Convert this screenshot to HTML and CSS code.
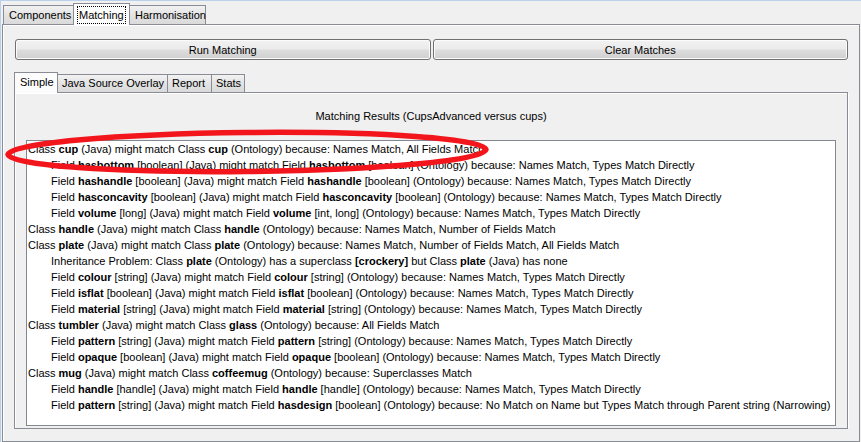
FILE: index.html
```html
<!DOCTYPE html>
<html>
<head>
<meta charset="utf-8">
<link rel="stylesheet" href="styles.css">
</head>
<body>
<div class="app">
  <div class="tabs outer-tabs">
    <div class="tab">Components</div>
    <div class="tab selected"><span class="focus">Matching</span></div>
    <div class="tab">Harmonisation</div>
  </div>
  <div class="panel outer-panel">
    <div class="buttons">
      <button class="btn">Run Matching</button>
      <button class="btn">Clear Matches</button>
    </div>
    <div class="tabs inner-tabs">
      <div class="tab selected">Simple</div>
      <div class="tab">Java Source Overlay</div>
      <div class="tab">Report</div>
      <div class="tab">Stats</div>
    </div>
    <div class="panel inner-panel">
      <div class="title">Matching Results (CupsAdvanced versus cups)</div>
      <div class="results">
        <div class="line">Class <b>cup</b> (Java) might match Class <b>cup</b> (Ontology) because: Names Match, All Fields Match</div>
        <div class="line ind">Field <b>hasbottom</b> [boolean] (Java) might match Field <b>hasbottom</b> [boolean] (Ontology) because: Names Match, Types Match Directly</div>
        <div class="line ind">Field <b>hashandle</b> [boolean] (Java) might match Field <b>hashandle</b> [boolean] (Ontology) because: Names Match, Types Match Directly</div>
        <div class="line ind">Field <b>hasconcavity</b> [boolean] (Java) might match Field <b>hasconcavity</b> [boolean] (Ontology) because: Names Match, Types Match Directly</div>
        <div class="line ind">Field <b>volume</b> [long] (Java) might match Field <b>volume</b> [int, long] (Ontology) because: Names Match, Types Match Directly</div>
        <div class="line">Class <b>handle</b> (Java) might match Class <b>handle</b> (Ontology) because: Names Match, Number of Fields Match</div>
        <div class="line">Class <b>plate</b> (Java) might match Class <b>plate</b> (Ontology) because: Names Match, Number of Fields Match, All Fields Match</div>
        <div class="line ind">Inheritance Problem: Class <b>plate</b> (Ontology) has a superclass <b>[crockery]</b> but Class <b>plate</b> (Java) has none</div>
        <div class="line ind">Field <b>colour</b> [string] (Java) might match Field <b>colour</b> [string] (Ontology) because: Names Match, Types Match Directly</div>
        <div class="line ind">Field <b>isflat</b> [boolean] (Java) might match Field <b>isflat</b> [boolean] (Ontology) because: Names Match, Types Match Directly</div>
        <div class="line ind">Field <b>material</b> [string] (Java) might match Field <b>material</b> [string] (Ontology) because: Names Match, Types Match Directly</div>
        <div class="line">Class <b>tumbler</b> (Java) might match Class <b>glass</b> (Ontology) because: All Fields Match</div>
        <div class="line ind">Field <b>pattern</b> [string] (Java) might match Field <b>pattern</b> [string] (Ontology) because: Names Match, Types Match Directly</div>
        <div class="line ind">Field <b>opaque</b> [boolean] (Java) might match Field <b>opaque</b> [boolean] (Ontology) because: Names Match, Types Match Directly</div>
        <div class="line">Class <b>mug</b> (Java) might match Class <b>coffeemug</b> (Ontology) because: Superclasses Match</div>
        <div class="line ind">Field <b>handle</b> [handle] (Java) might match Field <b>handle</b> [handle] (Ontology) because: Names Match, Types Match Directly</div>
        <div class="line ind">Field <b>pattern</b> [string] (Java) might match Field <b>hasdesign</b> [boolean] (Ontology) because: No Match on Name but Types Match through Parent string (Narrowing)</div>
      </div>
    </div>
  </div>
</div>
<svg class="annotation" width="861" height="442" viewBox="0 0 861 442">
  <ellipse cx="247" cy="152" rx="239" ry="19.5" fill="none" stroke="#f2161c" stroke-width="5.5" transform="rotate(-0.6 247 152)"/>
</svg>
</body>
</html>
```

FILE: styles.css
```css
* { box-sizing: border-box; }
html, body { margin: 0; padding: 0; }
body {
  width: 861px;
  height: 442px;
  overflow: hidden;
  background: #f0f0f0;
  border-top: 1px solid #b9d1ea;
  border-left: 1px solid #b9d1ea;
  font-family: "Liberation Sans", Arial, sans-serif;
  font-size: 11px;
  color: #000;
  position: relative;
}
.app {
  padding: 1px 0 0 1px;
  display: flex;
  flex-direction: column;
  height: 441px;
}
.tabs {
  display: flex;
  align-items: flex-end;
  position: relative;
  z-index: 1;
}
.outer-tabs { height: 22px; flex: none; padding-left: 1px; }
.tab {
  height: 19px;
  border: 1px solid #898c95;
  border-bottom: none;
  background: linear-gradient(#f2f2f2, #e3e3e3 50%, #dadada);
  padding: 0 5px;
  line-height: 18px;
  margin-right: -1px;
  white-space: nowrap;
}
.tab.selected {
  height: 22px;
  background: #fcfcfc;
  margin-bottom: -1px;
  line-height: 19px;
  padding: 0 3px;
  position: relative;
  z-index: 2;
}
.outer-tabs .tab:first-child { padding: 0 5px 0 5px; width: 71px; }
.outer-tabs .tab.selected { width: 57px; padding: 2px 3px 0; line-height: 16px; }
.focus {
  display: inline-block;
  border: 1px dotted #000;
  padding: 0 1px;
  line-height: 16px;
}
.outer-tabs .tab:last-child { width: 77px; }
.panel {
  border: 1px solid #898c95;
  background: #f0f0f0;
}
.outer-panel {
  width: 858px;
  height: 418px;
  flex: none;
  padding: 14px 11px 11px 11px;
  display: flex;
  flex-direction: column;
  box-shadow: inset 1px 1px 0 #fff;
}
.buttons {
  display: flex;
  gap: 2px;
  height: 21px;
  flex: none;
  margin-left: 1px;
}
.btn {
  flex: 1;
  font: inherit;
  color: #000;
  border: 1px solid #707070;
  border-radius: 3px;
  background: linear-gradient(#f2f2f2 0%, #ebebeb 45%, #dddddd 55%, #cfcfcf 100%);
  box-shadow: inset 0 0 0 1px #fcfcfc;
  padding: 0;
  height: 21px;
}
.inner-tabs {
  margin-top: 12px;
  height: 20px;
  flex: none;
}
.inner-tabs .tab { height: 18px; line-height: 17px; padding: 0 4px; }
.inner-tabs .tab.selected { height: 21px; line-height: 19px; padding: 0 5px; }
.inner-tabs .tab:nth-child(1) { width: 44px; }
.inner-tabs .tab:nth-child(2) { width: 111px; }
.inner-tabs .tab:nth-child(3) { width: 45px; }
.inner-tabs .tab:nth-child(4) { width: 34px; }
.inner-panel {
  height: 337px;
  flex: none;
  width: 834px;
  padding: 15px 11px 2px 11px;
  display: flex;
  flex-direction: column;
  box-shadow: inset 1px 1px 0 #fff, 2px 0 0 -1px #fff;
}
.title {
  text-align: center;
  height: 17px;
  line-height: 17px;
  margin-bottom: 15px;
  flex: none;
}
.results {
  flex: 1;
  background: #fff;
  border: 1px solid #828790;
  padding: 0 0 0 1px;
}
.line {
  height: 16px;
  line-height: 16px;
  white-space: nowrap;
}
.line.ind { padding-left: 23px; }
b { font-weight: bold; }
.annotation {
  position: absolute;
  left: -1px;
  top: -1px;
  pointer-events: none;
  z-index: 10;
}
```
